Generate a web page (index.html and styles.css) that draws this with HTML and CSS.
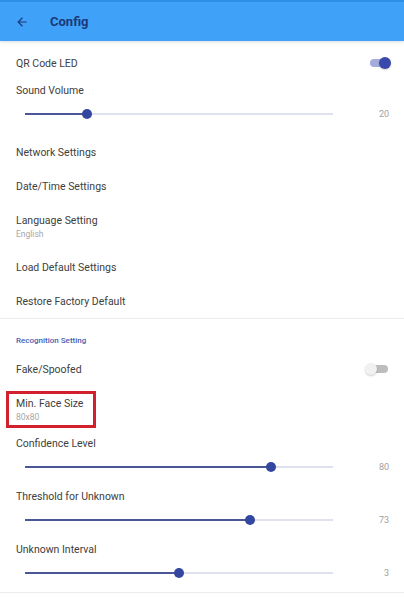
FILE: index.html
```html
<!DOCTYPE html>
<html lang="en">
<head>
    <meta charset="UTF-8">
    <meta name="viewport" content="width=device-width, initial-scale=1.0">
    <title>Config</title>
    <link rel="stylesheet" href="styles.css">
</head>
<body>
    <!-- Top bar -->
    <div class="app-bar">
        <svg class="back" width="14" height="14" viewBox="0 0 24 24">
            <path d="M20 11H7.83l5.59-5.59L12 4l-8 8 8 8 1.41-1.41L7.83 13H20v-2z" fill="#1b3a78"/>
        </svg>
        <span class="title">Config</span>
    </div>

    <!-- General settings -->
    <div class="section first">
        <div class="item">
            <span class="label">QR Code LED</span>
            <span class="switch on"><span class="knob"></span></span>
        </div>
        <div class="slider-block">
            <div class="slider-label">Sound Volume</div>
            <div class="slider-row">
                <div class="track"><div class="fill" style="width: 20%"></div><div class="thumb" style="left: 20%"></div></div>
                <span class="value">20</span>
            </div>
        </div>
        <div class="item gap"><span class="label">Network Settings</span></div>
        <div class="item"><span class="label">Date/Time Settings</span></div>
        <div class="item tall">
            <span class="label">Language Setting</span>
            <span class="sub">English</span>
        </div>
        <div class="item"><span class="label">Load Default Settings</span></div>
        <div class="item"><span class="label">Restore Factory Default</span></div>
    </div>

    <!-- Recognition settings -->
    <div class="section">
        <div class="section-title">Recognition Setting</div>
        <div class="item">
            <span class="label">Fake/Spoofed</span>
            <span class="switch"><span class="knob"></span></span>
        </div>
        <div class="item tall">
            <span class="label">Min. Face Size</span>
            <span class="sub">80x80</span>
            <div class="highlight"></div>
        </div>
        <div class="slider-block">
            <div class="slider-label">Confidence Level</div>
            <div class="slider-row">
                <div class="track"><div class="fill" style="width: 80%"></div><div class="thumb" style="left: 80%"></div></div>
                <span class="value">80</span>
            </div>
        </div>
        <div class="slider-block">
            <div class="slider-label">Threshold for Unknown</div>
            <div class="slider-row">
                <div class="track"><div class="fill" style="width: 73%"></div><div class="thumb" style="left: 73%"></div></div>
                <span class="value">73</span>
            </div>
        </div>
        <div class="slider-block">
            <div class="slider-label">Unknown Interval</div>
            <div class="slider-row">
                <div class="track"><div class="fill" style="width: 50%"></div><div class="thumb" style="left: 50%"></div></div>
                <span class="value">3</span>
            </div>
        </div>
    </div>
</body>
</html>
```

FILE: styles.css
```css
body {
    margin: 0;
    padding: 0;
    background-color: #ffffff;
    font-family: Roboto, "Noto Sans", sans-serif;
    color: #404040;
    width: 404px;
    height: 604px;
    overflow: hidden;
}

/* Top bar */
.app-bar {
    height: 41px;
    box-sizing: border-box;
    border-top: 2px solid #2f8ee6;
    background-color: #40a1f8;
    display: flex;
    align-items: center;
    padding-left: 15px;
    box-shadow: 0 1px 3px rgba(0, 0, 0, 0.15);
}

.back {
    margin-right: 21px;
}

.title {
    font-size: 13px;
    font-weight: bold;
    color: #1b3a78;
}

/* Sections */
.section {
    border-bottom: 1px solid #ededed;
}

.section.first {
    padding-top: 5px;
}

.item {
    position: relative;
    height: 34px;
    display: flex;
    flex-direction: column;
    justify-content: center;
    padding: 0 15px 0 16px;
}

.item.gap {
    margin-top: 2px;
}

.item.tall {
    height: 47px;
}

.label {
    font-size: 10.5px;
    line-height: 13px;
}

.sub {
    font-size: 8.5px;
    line-height: 10px;
    color: #a8a8a8;
    margin-top: 2px;
}

.section-title {
    font-size: 8px;
    font-weight: 500;
    color: #4a5bb0;
    padding: 16px 0 5px 16px;
    line-height: 12px;
}

/* Switches */
.switch {
    position: absolute;
    right: 16px;
    top: 13px;
    width: 18px;
    height: 8px;
    border-radius: 4px;
    background-color: #bdbdbd;
}

.switch .knob {
    position: absolute;
    top: -2px;
    left: -5px;
    width: 12px;
    height: 12px;
    border-radius: 50%;
    background-color: #f1f1f1;
    box-shadow: 0 1px 2px rgba(0, 0, 0, 0.2);
}

.switch.on {
    background-color: #a4acdc;
}

.switch.on .knob {
    left: 9px;
    background-color: #3949ab;
}

/* Sliders */
.slider-block {
    padding-bottom: 7px;
}

.slider-label {
    height: 22px;
    line-height: 22px;
    font-size: 10.5px;
    padding-left: 16px;
}

.slider-row {
    height: 24px;
    display: flex;
    align-items: center;
    padding: 0 15px 0 25px;
}

.track {
    position: relative;
    flex: 1;
    height: 1.5px;
    background-color: #dfe1ef;
}

.fill {
    height: 100%;
    background-color: #4a5796;
}

.thumb {
    position: absolute;
    top: -4.5px;
    width: 10px;
    height: 10px;
    margin-left: -5px;
    border-radius: 50%;
    background-color: #3447a0;
}

.value {
    width: 56px;
    text-align: right;
    font-size: 9px;
    color: #a0a0a0;
}

/* Annotation box */
.highlight {
    position: absolute;
    left: 6px;
    top: 5px;
    width: 90px;
    height: 37px;
    box-sizing: border-box;
    border: 3px solid #d3202d;
}
```
